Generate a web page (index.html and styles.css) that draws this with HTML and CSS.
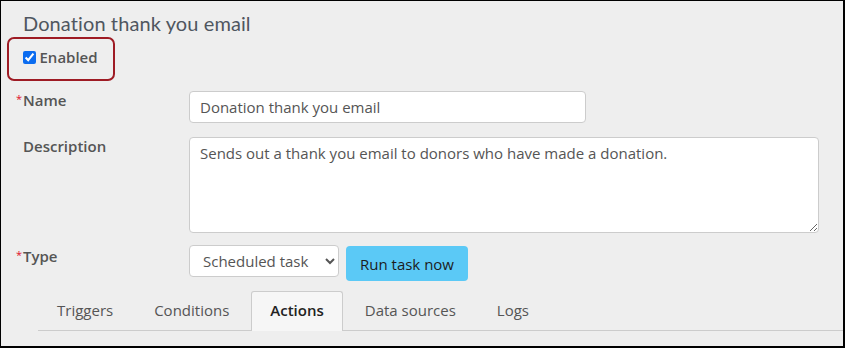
FILE: index.html
```html
<!DOCTYPE html>
<html>
<head>
<meta charset="utf-8">
<link rel="stylesheet" href="styles.css">
</head>
<body>
<div class="frame">
  <h1 class="title">Donation thank you email</h1>
  <div class="enabled-box">
    <label class="enabled"><input type="checkbox" checked> Enabled</label>
  </div>
  <div class="form">
    <div class="label req">Name</div>
    <div class="field"><input class="input name" type="text" value="Donation thank you email"></div>
    <div class="label">Description</div>
    <div class="field"><textarea class="input desc">Sends out a thank you email to donors who have made a donation.</textarea></div>
    <div class="label req">Type</div>
    <div class="field row">
      <select class="input select"><option>Scheduled task</option></select>
      <button class="btn">Run task now</button>
    </div>
  </div>
  <ul class="tabs">
    <li class="tab">Triggers</li>
    <li class="tab">Conditions</li>
    <li class="tab active">Actions</li>
    <li class="tab">Data sources</li>
    <li class="tab">Logs</li>
  </ul>
</div>
</body>
</html>
```
FILE: styles.css
```css
html, body {
  margin: 0;
  padding: 0;
}
body {
  width: 845px;
  height: 348px;
  overflow: hidden;
  font-family: "Open Sans", "Liberation Sans", sans-serif;
}
.frame {
  box-sizing: border-box;
  width: 845px;
  height: 348px;
  background: #eeeeee;
  border-style: solid;
  border-color: #000;
  border-width: 1px 2px 2px 1px;
  padding: 0;
}
.title {
  margin: 0;
  padding: 10px 0 0 22px;
  font-family: "Lato", "Open Sans", sans-serif;
  font-weight: 400;
  font-size: 20px;
  line-height: 24px;
  color: #4f5660;
  letter-spacing: 0.1px;
}
.enabled-box {
  box-sizing: border-box;
  margin: 2px 0 0 6px;
  width: 108px;
  height: 44px;
  border: 2.5px solid #9e1b24;
  border-radius: 7px;
  padding: 8px 0 0 13.5px;
}
.enabled {
  display: flex;
  align-items: center;
  gap: 4px;
  font-weight: 600;
  font-size: 15px;
  color: #555;
  line-height: 20px;
}
.enabled input {
  margin: 0;
  width: 13px;
  height: 13px;
  accent-color: #0b6cf0;
}
.form {
  display: grid;
  grid-template-columns: 166px 630px;
  row-gap: 14px;
  margin: 10px 0 0 22px;
}
.field {
  display: block;
}
.label {
  font-weight: 600;
  font-size: 15px;
  color: #555;
  line-height: 20px;
  margin-top: -1px;
}
.req::before {
  content: "*";
  color: #e0102a;
  display: inline-block;
  width: 7px;
  margin-left: -7px;
  font-size: 11px;
  font-weight: 400;
  vertical-align: top;
  line-height: 18px;
}
.input {
  box-sizing: border-box;
  display: block;
  font-family: "Open Sans", "Liberation Sans", sans-serif;
  font-size: 15px;
  color: #555;
  background: #fff;
  border: 1px solid #ccc;
  border-radius: 4px;
  margin: 0;
}
.name {
  width: 397px;
  height: 32px;
  padding: 0 10px;
}
.desc {
  width: 630px;
  height: 96px;
  padding: 4px 10px;
  resize: vertical;
  line-height: 22px;
}
.row {
  display: flex;
  align-items: flex-start;
  gap: 7px;
  margin-top: -2px;
}
.select {
  width: 150px;
  height: 32px;
  padding: 0 8px 0 9px;
}
.btn {
  box-sizing: border-box;
  height: 35px;
  width: 122px;
  margin-top: 1px;
  border: none;
  border-radius: 4px;
  background: #5bc9f6;
  color: #1c1c1c;
  font-family: "Open Sans", "Liberation Sans", sans-serif;
  font-size: 15px;
  font-weight: 500;
  padding: 0;
}
.tabs {
  list-style: none;
  margin: 10px 0 0 37px;
  padding: 0;
  display: flex;
  gap: 3px;
  border-bottom: 1px solid #ccc;
}
.tab {
  box-sizing: border-box;
  height: 39px;
  padding: 0 18px;
  font-size: 15px;
  line-height: 37px;
  color: #555;
  border: 1px solid transparent;
  border-bottom: none;
  border-radius: 3px 3px 0 0;
}
.tab.active {
  background: #f6f6f6;
  border-color: #ccc;
  color: #222;
  font-weight: 600;
  margin-bottom: -1px;
  height: 40px;
}
```
